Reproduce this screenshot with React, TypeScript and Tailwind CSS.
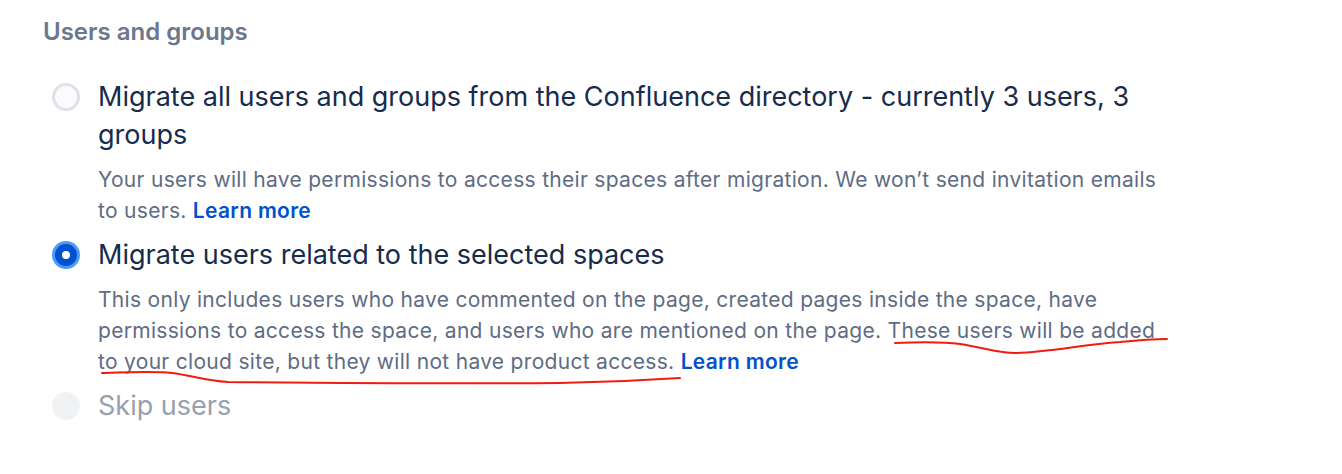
import React, { useState } from 'react';

type Option = {
  id: string;
  label: string;
  description?: React.ReactNode;
  disabled?: boolean;
};

const Radio: React.FC<{ checked: boolean; disabled?: boolean }> = ({ checked, disabled }) => {
  if (disabled) {
    return <span className="block w-[28px] h-[28px] rounded-full bg-[#F1F2F4]" />;
  }
  if (checked) {
    return (
      <span className="flex items-center justify-center w-[28px] h-[28px] rounded-full bg-[#4C9AFF]">
        <span className="flex items-center justify-center w-[22px] h-[22px] rounded-full bg-[#0052CC]">
          <span className="block w-[8px] h-[8px] rounded-full bg-white" />
        </span>
      </span>
    );
  }
  return <span className="block w-[28px] h-[28px] rounded-full bg-[#FAFBFC] border-[3px] border-[#DFE1E6]" />;
};

const LearnMore = () => (
  <a href="#" className="font-semibold text-[#0052CC]">
    Learn more
  </a>
);

const App: React.FC = () => {
  const [selected, setSelected] = useState('related');

  const options: Option[] = [
    {
      id: 'all',
      label: 'Migrate all users and groups from the Confluence directory - currently 3 users, 3 groups',
      description: (
        <>
          Your users will have permissions to access their spaces after migration. We won’t send invitation emails to
          users. <LearnMore />
        </>
      ),
    },
    {
      id: 'related',
      label: 'Migrate users related to the selected spaces',
      description: (
        <>
          This only includes users who have commented on the page, created pages inside the space, have permissions to
          access the space, and users who are mentioned on the page. These users will be added to your cloud site, but
          they will not have product access. <LearnMore />
        </>
      ),
    },
    { id: 'skip', label: 'Skip users', disabled: true },
  ];

  return (
    <div className="relative w-[1342px] h-[474px] bg-white font-['Inter','Noto_Sans',sans-serif] antialiased">
      <div className="pl-[43px] pt-[18px]">
        <h3 className="text-[24px] leading-[28px] font-semibold text-[#6B778C]">Users and groups</h3>

        <div className="mt-[32px] flex flex-col gap-[10px] w-[1125px]">
          {options.map((opt) => (
            <div key={opt.id} className="flex gap-[18px] pl-[9px]">
              <button
                className="shrink-0 mt-[5px] h-[28px]"
                disabled={opt.disabled}
                onClick={() => setSelected(opt.id)}
              >
                <Radio checked={selected === opt.id} disabled={opt.disabled} />
              </button>
              <div className="flex flex-col gap-[10px]">
                <label
                  className={`text-[27px] leading-[38px] ${opt.disabled ? 'text-[#97A0AF]' : 'text-[#172B4D]'}`}
                >
                  {opt.label}
                </label>
                {opt.description && (
                  <p className="text-[21px] leading-[31px] tracking-[0.3px] text-[#5E6C84]">{opt.description}</p>
                )}
              </div>
            </div>
          ))}
        </div>
      </div>

      {/* hand-drawn annotation */}
      <svg className="absolute inset-0 pointer-events-none" width="1342" height="474" fill="none">
        <path
          d="M895 343 C 920 342, 945 342, 960 344 C 985 348, 1000 353, 1015 353 C 1050 352, 1080 345, 1120 342 C 1140 340, 1155 339, 1167 339"
          stroke="#F21B0F"
          strokeWidth="2"
          strokeLinecap="round"
        />
        <path
          d="M102 373 C 130 372, 155 371, 172 373 C 190 375, 205 381, 228 382 C 330 383, 450 384, 560 383 C 620 382, 650 380, 680 378"
          stroke="#F21B0F"
          strokeWidth="2"
          strokeLinecap="round"
        />
      </svg>
    </div>
  );
};

export default App;
